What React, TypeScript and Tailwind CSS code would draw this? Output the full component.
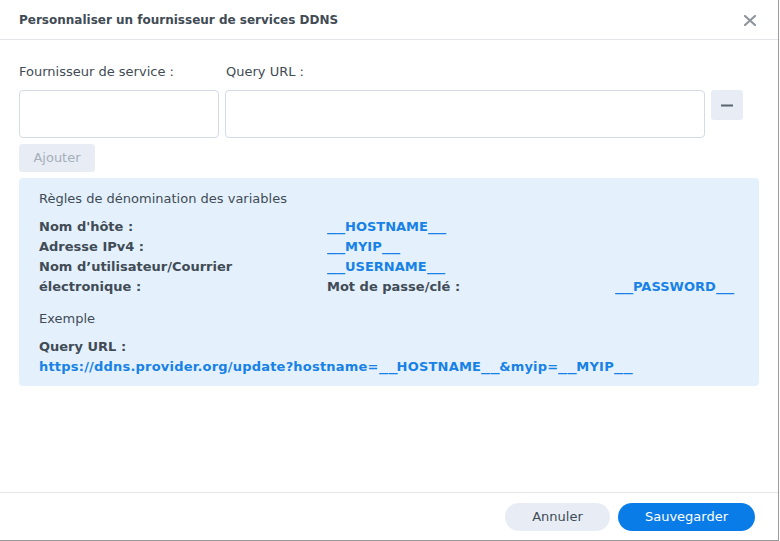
const FONT = { fontFamily: '"DejaVu Sans", Verdana, sans-serif' }

// Verdana-style underscores are wider than DejaVu's: stretch them without gaps
function Bar() {
  return (
    <span className="inline-block w-[18px]">
      <span className="inline-block origin-left scale-x-[1.4]">__</span>
    </span>
  )
}

function Var({ name }: { name: string }) {
  return (
    <span className="text-[#1781e6]">
      <Bar />
      {name}
      <Bar />
    </span>
  )
}

const rows: [string, string][] = [
  ["Nom d'hôte :", 'HOSTNAME'],
  ['Adresse IPv4 :', 'MYIP'],
]

export default function App() {
  return (
    <div className="w-[780px] h-[541px] bg-white overflow-hidden" style={FONT}>
      <div className="w-[779px] h-[541px] flex flex-col border-r border-b border-[#9a9a9a] bg-white">
        {/* Header */}
        <div className="h-[40px] shrink-0 flex items-center justify-between pl-[19px] pr-[22px] border-b border-[#e3e7ec]">
          <span className="text-[12px] font-bold text-[#414b55]">
            Personnaliser un fournisseur de services DDNS
          </span>
          <svg width="12" height="11" viewBox="0 0 12 11" className="mt-[1px]">
            <path d="M1 1 L11 10 M11 1 L1 10" stroke="#8e959d" strokeWidth="2.2" strokeLinecap="round" />
          </svg>
        </div>

        {/* Body */}
        <div className="flex-1 px-[19px] pt-[23px]">
          <div className="flex text-[13px] text-[#414b55] h-[18px] items-center">
            <span className="w-[207px]">Fournisseur de service :</span>
            <span>Query URL :</span>
          </div>

          <div className="flex mt-[9px] gap-[6px]">
            <div className="w-[200px] h-[48px] rounded-[4px] border border-[#d3dce6] bg-white" />
            <div className="w-[480px] h-[48px] rounded-[4px] border border-[#d3dce6] bg-white" />
            <button className="w-[32px] h-[30px] rounded-[3px] bg-[#e8edf5] flex items-center justify-center">
              <svg width="12" height="3" viewBox="0 0 12 3">
                <rect x="0" y="0.5" width="12" height="2" fill="#5a636e" />
              </svg>
            </button>
          </div>

          <button className="mt-[6px] h-[28px] w-[76px] rounded-[3px] bg-[#e8edf5] text-[13px] text-[#a6aeb8]">
            Ajouter
          </button>

          {/* Info box */}
          <div className="mt-[6px] w-[740px] h-[208px] rounded-[4px] bg-[#e4f1fd] px-[20px] pt-[11px] text-[13px] text-[#414b55]">
            <div className="leading-[20px]">Règles de dénomination des variables</div>
            <div className="mt-[8px] font-bold leading-[20px]">
              {rows.map(([k, v]) => (
                <div key={k} className="flex">
                  <span className="w-[288px]">{k}</span>
                  <Var name={v} />
                </div>
              ))}
              <div className="flex">
                <span className="w-[288px]">
                  Nom d’utilisateur/Courrier
                  <br />
                  électronique :
                </span>
                <div className="flex flex-col">
                  <Var name="USERNAME" />
                  <div className="flex">
                    <span className="w-[288px]">Mot de passe/clé :</span>
                    <Var name="PASSWORD" />
                  </div>
                </div>
              </div>
            </div>
            <div className="mt-[12px] leading-[20px]">Exemple</div>
            <div className="mt-[8px] font-bold leading-[20px]">
              <div>Query URL :</div>
              <div className="text-[#1781e6] tracking-[0.2px]">
                https://ddns.provider.org/update?hostname=<Var name="HOSTNAME" />&amp;myip=<Var name="MYIP" />
              </div>
            </div>
          </div>
        </div>

        {/* Footer */}
        <div className="h-[48px] shrink-0 border-t border-[#e3e7ec] flex items-center justify-end gap-[8px] pr-[23px]">
          <button className="h-[28px] w-[105px] rounded-full bg-[#e8edf5] text-[13px] text-[#414b55]">
            Annuler
          </button>
          <button className="h-[28px] w-[137px] rounded-full bg-[#0a7ce8] text-[13px] text-white">
            Sauvegarder
          </button>
        </div>
      </div>
    </div>
  )
}
